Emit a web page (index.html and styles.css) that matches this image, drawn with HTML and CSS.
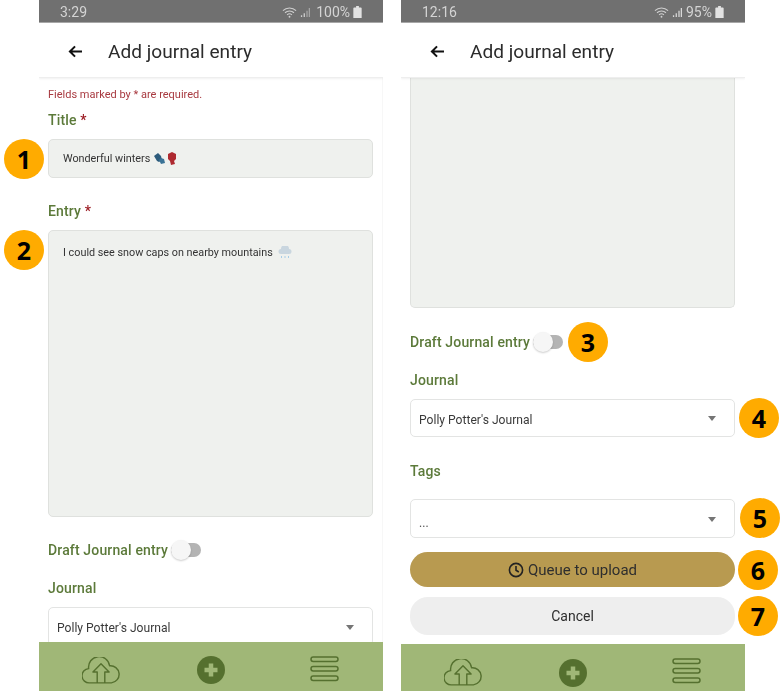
FILE: index.html
```html
<!DOCTYPE html>
<html lang="en">
<head>
<meta charset="utf-8">
<title>Add journal entry</title>
<link rel="stylesheet" href="styles.css">
</head>
<body>
<main class="canvas">
  <section class="phone">
    <div class="status">
      <span class="time">3:29</span>
      <span class="status-right">
        <svg class="wifi" viewBox="0 0 16 12"><path d="M1 4.500a10 10 0 0 1 14 0M3.200 6.800a7 7 0 0 1 9.600 0M5.400 9a4 4 0 0 1 5.200 0" fill="none" stroke="#d0d0d0" stroke-width="1.100"/><circle cx="8" cy="11" r="1" fill="#d0d0d0"/></svg>
        <svg class="signal" viewBox="0 0 11 11"><path d="M1 9h1.400v2H1zM4 7h1.400v4H4z" fill="#d0d0d0"/><path d="M7 4h1.400v7H7zM9.600 1H11v10H9.600z" fill="#a5a5a5"/></svg>
        <span class="pct">100%</span>
        <svg class="battery" viewBox="0 0 9 13"><path d="M3 0h3v1.500h2a1 1 0 0 1 1 1V13H0V2.500a1 1 0 0 1 1-1h2z" fill="#e2e2e2"/></svg>
      </span>
    </div>
    <header class="bar">
      <svg class="back" viewBox="0 0 16 14"><path d="M15 7H2M7.500 1.500 2 7l5.500 5.500" fill="none" stroke="#111" stroke-width="2.200"/></svg>
      <h1>Add journal entry</h1>
    </header>
    <div class="content first">
      <p class="note">Fields marked by * are required.</p>
      <label class="lab title-lab">Title <b>*</b></label>
      <div class="field title-field">Wonderful winters
        <svg class="emoji mitts" viewBox="0 0 24 13"><path d="M1 4l4-3 3 3 1 4-3 2-2-1z" fill="#2d5c7c"/><path d="M6 8l2-2 3 1 1 4-4 1z" fill="#3b7396"/><path d="M15 2l4-2 4 2 0 5-2 2 1 3-4 1-1-4-2-2z" fill="#ae2a30"/></svg>
      </div>
      <label class="lab entry-lab">Entry <b>*</b></label>
      <div class="field area">I could see snow caps on nearby mountains
        <svg class="emoji cloud" viewBox="0 0 14 13"><path d="M3 8a2.500 2.500 0 0 1 0-5 4 4 0 0 1 8 0 2.500 2.500 0 0 1 0 5z" fill="#c9d6df"/><path d="M3 10h1v2H3zM6.500 10h1v2h-1zM10 10h1v2h-1z" fill="#a7cde6"/></svg>
      </div>
      <div class="draft left-draft"><span class="lab">Draft Journal entry</span><span class="toggle"></span></div>
      <label class="lab journal-lab">Journal</label>
      <div class="select">Polly Potter's Journal<i class="caret"></i></div>
    </div>
    <nav class="nav">
      <svg class="upload" viewBox="0 0 40 28"><path d="M16 27H8a7.500 7.500 0 0 1-1-15A11 11 0 0 1 29 9a9 9 0 0 1 2 18h-7M16 27V15.500h-4.500L20 7l8.500 8.500H24V27z" fill="none" stroke="#55702f" stroke-width="1.500" stroke-linejoin="round"/></svg>
      <svg class="plus" viewBox="0 0 28 28"><circle cx="14" cy="14" r="14" fill="#55702f"/><path d="M11.750 7.500h4.500v4.250h4.250v4.500h-4.250v4.250h-4.500v-4.250H7.500v-4.500h4.250z" fill="#a0b777"/></svg>
      <svg class="menu" viewBox="0 0 29 26"><g fill="none" stroke="#55702f" stroke-width="1.500"><rect x="1" y="1" width="27" height="4.500" rx="2.200"/><rect x="1" y="10.500" width="27" height="4.500" rx="2.200"/><rect x="1" y="20" width="27" height="4.500" rx="2.200"/></g></svg>
    </nav>
  </section>

  <section class="phone">
    <div class="status">
      <span class="time">12:16</span>
      <span class="status-right">
        <svg class="wifi" viewBox="0 0 16 12"><path d="M1 4.500a10 10 0 0 1 14 0M3.200 6.800a7 7 0 0 1 9.600 0M5.400 9a4 4 0 0 1 5.200 0" fill="none" stroke="#d0d0d0" stroke-width="1.100"/><circle cx="8" cy="11" r="1" fill="#d0d0d0"/></svg>
        <svg class="signal narrow" viewBox="0 0 11 11"><path d="M1 9h1.400v2H1zM4 7h1.400v4H4zM7 4h1.400v7H7zM9.600 1H11v10H9.600z" fill="#d8d8d8"/></svg>
        <span class="pct">95%</span>
        <svg class="battery" viewBox="0 0 9 13"><path d="M3 0h3v1.500h2a1 1 0 0 1 1 1V13H0V2.500a1 1 0 0 1 1-1h2z" fill="#e2e2e2"/></svg>
      </span>
    </div>
    <header class="bar">
      <svg class="back" viewBox="0 0 16 14"><path d="M15 7H2M7.500 1.500 2 7l5.500 5.500" fill="none" stroke="#111" stroke-width="2.200"/></svg>
      <h1>Add journal entry</h1>
    </header>
    <div class="content">
      <div class="field area scrolled"></div>
      <div class="draft right-draft"><span class="lab">Draft Journal entry</span><span class="toggle"></span></div>
      <label class="lab right-journal">Journal</label>
      <div class="select full">Polly Potter's Journal<i class="caret"></i></div>
      <label class="lab tags-lab">Tags</label>
      <div class="select tags dots">...<i class="caret"></i></div>
      <button class="btn queue" type="button">
        <svg class="clock" viewBox="0 0 16 16"><circle cx="8" cy="8" r="6.600" fill="none" stroke="#222" stroke-width="1.600"/><path d="M8 4v4.300l2.800 1.700" fill="none" stroke="#222" stroke-width="1.600"/></svg>
        Queue to upload
      </button>
      <button class="btn cancel" type="button">Cancel</button>
    </div>
    <nav class="nav short">
      <svg class="upload" viewBox="0 0 40 28"><path d="M16 27H8a7.500 7.500 0 0 1-1-15A11 11 0 0 1 29 9a9 9 0 0 1 2 18h-7M16 27V15.500h-4.500L20 7l8.500 8.500H24V27z" fill="none" stroke="#55702f" stroke-width="1.500" stroke-linejoin="round"/></svg>
      <svg class="plus" viewBox="0 0 28 28"><circle cx="14" cy="14" r="14" fill="#55702f"/><path d="M11.750 7.500h4.500v4.250h4.250v4.500h-4.250v4.250h-4.500v-4.250H7.500v-4.500h4.250z" fill="#a0b777"/></svg>
      <svg class="menu" viewBox="0 0 29 26"><g fill="none" stroke="#55702f" stroke-width="1.500"><rect x="1" y="1" width="27" height="4.500" rx="2.200"/><rect x="1" y="10.500" width="27" height="4.500" rx="2.200"/><rect x="1" y="20" width="27" height="4.500" rx="2.200"/></g></svg>
    </nav>
  </section>

  <span class="badge b1">1</span>
  <span class="badge b2">2</span>
  <span class="badge b3">3</span>
  <span class="badge b4">4</span>
  <span class="badge b5">5</span>
  <span class="badge b6">6</span>
  <span class="badge b7">7</span>
</main>
</body>
</html>
```
FILE: styles.css
```css
* { box-sizing: border-box; }
html, body { margin: 0; background: #fff; }
body { font-family: Roboto, "Liberation Sans", sans-serif; overflow: hidden; }
.canvas {
  position: relative;
  width: 784px;
  height: 692px;
  display: flex;
  gap: 18px;
  padding: 0 39px;
}
.phone {
  width: 344px;
  height: 691px;
  display: flex;
  flex-direction: column;
  overflow: hidden;
  background: #fff;
  filter: blur(0.4px);
}
.status {
  height: 23px;
  flex: none;
  background: #707070;
  border-bottom: 1px solid #a8a8a8;
  color: #d4d4d4;
  display: flex;
  align-items: center;
  justify-content: space-between;
  padding: 1px 21px 0 21px;
  font-size: 14px;
}
.status-right { display: flex; align-items: center; }
.wifi { width: 15px; height: 12px; margin-right: 3px; }
.signal { width: 10px; height: 10px; margin-right: 6px; }
.signal.narrow { margin-right: 4px; }
.pct { margin-right: 3px; }
.battery { width: 9px; height: 12px; }
.bar {
  height: 55px;
  flex: none;
  display: flex;
  align-items: center;
  padding: 2px 0 0 29px;
  border-bottom: 1px solid #eee;
  box-shadow: 0 1px 2px rgba(0, 0, 0, .06);
  position: relative;
  z-index: 1;
  background: #fff;
}
.back { width: 15px; height: 13px; margin-right: 25px; }
h1 { margin: 0; font-size: 19.100px; font-weight: 400; color: #2c2c2c; }
.content {
  flex: 1;
  min-height: 0;
  overflow: hidden;
  padding: 0 10px 0 9px;
}
.content.first { padding: 10px 9px 0 9px; border-right: 1px solid #f7f7f7; }
.note { margin: 0; font-size: 11px; line-height: 14px; color: #a83a40; }
.lab { display: block; font-size: 14px; font-weight: 500; line-height: 16px; color: #5c7a3a; letter-spacing: .15px; }
.lab b { color: #9c1c24; font-weight: 500; }
.title-lab { margin-top: 10px; }
.field {
  background: #eff1ee;
  border: 1.500px solid #dfe1de;
  border-radius: 5px;
  font-size: 10.800px;
  color: #333;
  padding: 0 14px;
}
.title-field { height: 39px; margin-top: 11px; display: flex; align-items: center; }
.emoji { margin-left: 3px; }
.mitts { width: 24px; height: 13px; }
.cloud { width: 14px; height: 13px; }
.entry-lab { margin-top: 25px; }
.area { height: 287px; margin-top: 11px; padding-top: 14px; display: block; line-height: 15px; }
.area .emoji { vertical-align: -3px; }
.scrolled { height: 231px; margin: -1px 0 0 0; border-top: 0; border-radius: 0 0 5px 5px; }
.draft { display: flex; align-items: center; }
.left-draft { margin-top: 25px; }
.right-draft { margin-top: 26px; }
.toggle {
  position: relative;
  width: 30px;
  height: 14px;
  margin-left: 3px;
  border-radius: 7px;
  background: #b4b4b4;
}
.toggle::before {
  content: "";
  position: absolute;
  left: 0;
  top: -3px;
  width: 20px;
  height: 20px;
  border-radius: 50%;
  background: #f6f6f6;
  box-shadow: 0 1px 2px rgba(0, 0, 0, .2);
}
.journal-lab { margin-top: 22px; }
.right-journal { margin-top: 22px; }
.select {
  position: relative;
  height: 39px;
  margin-top: 11px;
  background: #fff;
  border: 1.500px solid #e3e4e3;
  border-radius: 5px;
  display: flex;
  align-items: center;
  padding: 3px 8px 0;
  font-size: 12.100px;
  color: #3a3a3a;
}
.select.full { height: 38px; }
.select.tags { margin-top: 20px; }
.dots { color: #555; padding-top: 9px; }
.caret {
  position: absolute;
  right: 18.500px;
  top: 50%;
  margin-top: -2px;
  border-left: 4.500px solid transparent;
  border-right: 4.500px solid transparent;
  border-top: 5px solid #757575;
}
.tags-lab { margin-top: 26px; }
.btn {
  display: flex;
  align-items: center;
  justify-content: center;
  width: 100%;
  border: 0;
  border-radius: 18px;
  font-family: inherit;
  font-size: 14px;
  color: #2e2e2e;
  padding: 0;
}
.queue { height: 35px; margin-top: 14px; background: #b89a50; font-size: 15px; }
.clock { width: 16px; height: 16px; margin-right: 4px; }
.cancel { height: 38px; margin-top: 10px; background: #eee; }
.nav {
  height: 49px;
  flex: none;
  background: #a0b777;
  display: flex;
  align-items: center;
  justify-content: space-between;
  padding: 7px 44px 0 43px;
}
.nav.short { height: 47px; padding-top: 10px; }
.upload { width: 38px; height: 27px; }
.plus { width: 28px; height: 28px; margin-right: 9px; }
.menu { width: 29px; height: 26px; margin-bottom: 3px; }
.badge {
  position: absolute;
  width: 40px;
  height: 40px;
  border-radius: 50%;
  background: #ffab00;
  color: #000;
  font-family: "Open Sans", sans-serif;
  font-weight: 700;
  font-size: 25px;
  line-height: 40px;
  text-align: center;
}
.b1 { left: 4px; top: 139px; }
.b2 { left: 4px; top: 230px; }
.b3 { left: 568px; top: 322px; }
.b4 { left: 739px; top: 398px; }
.b5 { left: 740px; top: 498px; }
.b6 { left: 738px; top: 550px; }
.b7 { left: 738px; top: 596px; }
```
